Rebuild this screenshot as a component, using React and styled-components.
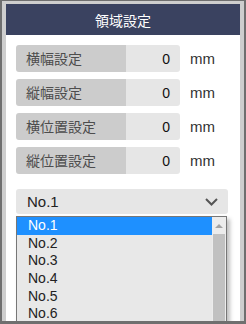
import React from 'react'
import styled, {createGlobalStyle} from 'styled-components'

const GlobalStyle = createGlobalStyle`
  html, body {
    margin: 0;
    padding: 0;
    background: #6f6f6f;
  }
  body {
    font-family: "Liberation Sans", "Noto Sans CJK JP", sans-serif;
    overflow: hidden;
  }
`

const fields = [
  {label: '横幅設定', value: 0},
  {label: '縦幅設定', value: 0},
  {label: '横位置設定', value: 0},
  {label: '縦位置設定', value: 0},
]

const options = ['No.1', 'No.2', 'No.3', 'No.4', 'No.5', 'No.6']

const Panel = styled.div`
  box-sizing: border-box;
  margin: 1px 2px 0;
  height: 320px;
  border: 4px solid #cecece;
  border-top-width: 3px;
  border-bottom: none;
  background: #fff;
  overflow: hidden;
`

const Header = styled.h1`
  margin: 0;
  height: 31px;
  background: #3a4260;
  color: #fff;
  font-family: "Noto Sans CJK JP", sans-serif;
  font-size: 14px;
  font-weight: normal;
  display: flex;
  align-items: center;
  justify-content: center;
`

const Body = styled.div`
  padding: 10px 12px 0 10px;
  display: flex;
  flex-direction: column;
  gap: 7px;
`

const Row = styled.div`
  display: flex;
  align-items: center;
  height: 27px;
`

const Label = styled.div`
  box-sizing: border-box;
  width: 110px;
  height: 100%;
  padding: 0 0 1px 10px;
  background: #cccccc;
  border-radius: 3px 0 0 3px;
  color: #4d4d4d;
  font-family: "Noto Sans CJK JP", sans-serif;
  font-size: 14px;
  display: flex;
  align-items: center;
`

const Value = styled.div`
  box-sizing: border-box;
  width: 54px;
  height: 100%;
  padding-right: 10px;
  background: #e6e6e6;
  border-radius: 0 3px 3px 0;
  color: #111;
  font-size: 14px;
  display: flex;
  align-items: center;
  justify-content: flex-end;
`

const Unit = styled.span`
  margin-left: 10px;
  color: #333;
  font-size: 15px;
`

const SelectWrap = styled.div`
  position: relative;
  margin-top: 8px;
`

const SelectBox = styled.div`
  box-sizing: border-box;
  height: 25px;
  padding: 0 10px 0 11px;
  background: #e6e6e6;
  border-radius: 3px;
  color: #222;
  font-size: 15px;
  display: flex;
  align-items: center;
  justify-content: space-between;
`

const ListBox = styled.div`
  position: absolute;
  top: 27px;
  left: 0;
  width: 211px;
  height: 120px;
  box-sizing: border-box;
  border: 1px solid #777;
  background: #e8e8e8;
  box-shadow: 3px 3px 4px rgba(0, 0, 0, 0.25);
  display: flex;
`

const Items = styled.ul`
  flex: 1;
  margin: 0;
  padding: 0;
  list-style: none;
`

const Item = styled.li`
  height: 17.7px;
  line-height: 17.7px;
  padding-left: 11px;
  font-size: 14px;
  color: ${p => (p.$active ? '#fff' : '#222')};
  background: ${p => (p.$active ? '#1e90ff' : 'transparent')};
`

const Scrollbar = styled.div`
  width: 14px;
  background: #ececec;
  display: flex;
  flex-direction: column;
  align-items: center;
`

const ArrowUp = styled.div`
  width: 0;
  height: 0;
  margin: 7px 0 6px;
  border-left: 4px solid transparent;
  border-right: 4px solid transparent;
  border-bottom: 4px solid #a3a3a3;
`

const Thumb = styled.div`
  width: 12px;
  flex: 1;
  background: #c1c1c1;
`

const Chevron = () => (
  <svg width="13" height="8" viewBox="0 0 13 8">
    <path d="M1 1 L6.5 6.5 L12 1" fill="none" stroke="#555" strokeWidth="2" />
  </svg>
)

export default function App() {
  return (
    <>
      <GlobalStyle />
      <Panel>
        <Header>領域設定</Header>
        <Body>
          {fields.map(f => (
            <Row key={f.label}>
              <Label>{f.label}</Label>
              <Value>{f.value}</Value>
              <Unit>mm</Unit>
            </Row>
          ))}
          <SelectWrap>
            <SelectBox>
              <span>No.1</span>
              <Chevron />
            </SelectBox>
            <ListBox>
              <Items>
                {options.map((o, i) => (
                  <Item key={o} $active={i === 0}>{o}</Item>
                ))}
              </Items>
              <Scrollbar>
                <ArrowUp />
                <Thumb />
              </Scrollbar>
            </ListBox>
          </SelectWrap>
        </Body>
      </Panel>
    </>
  )
}
